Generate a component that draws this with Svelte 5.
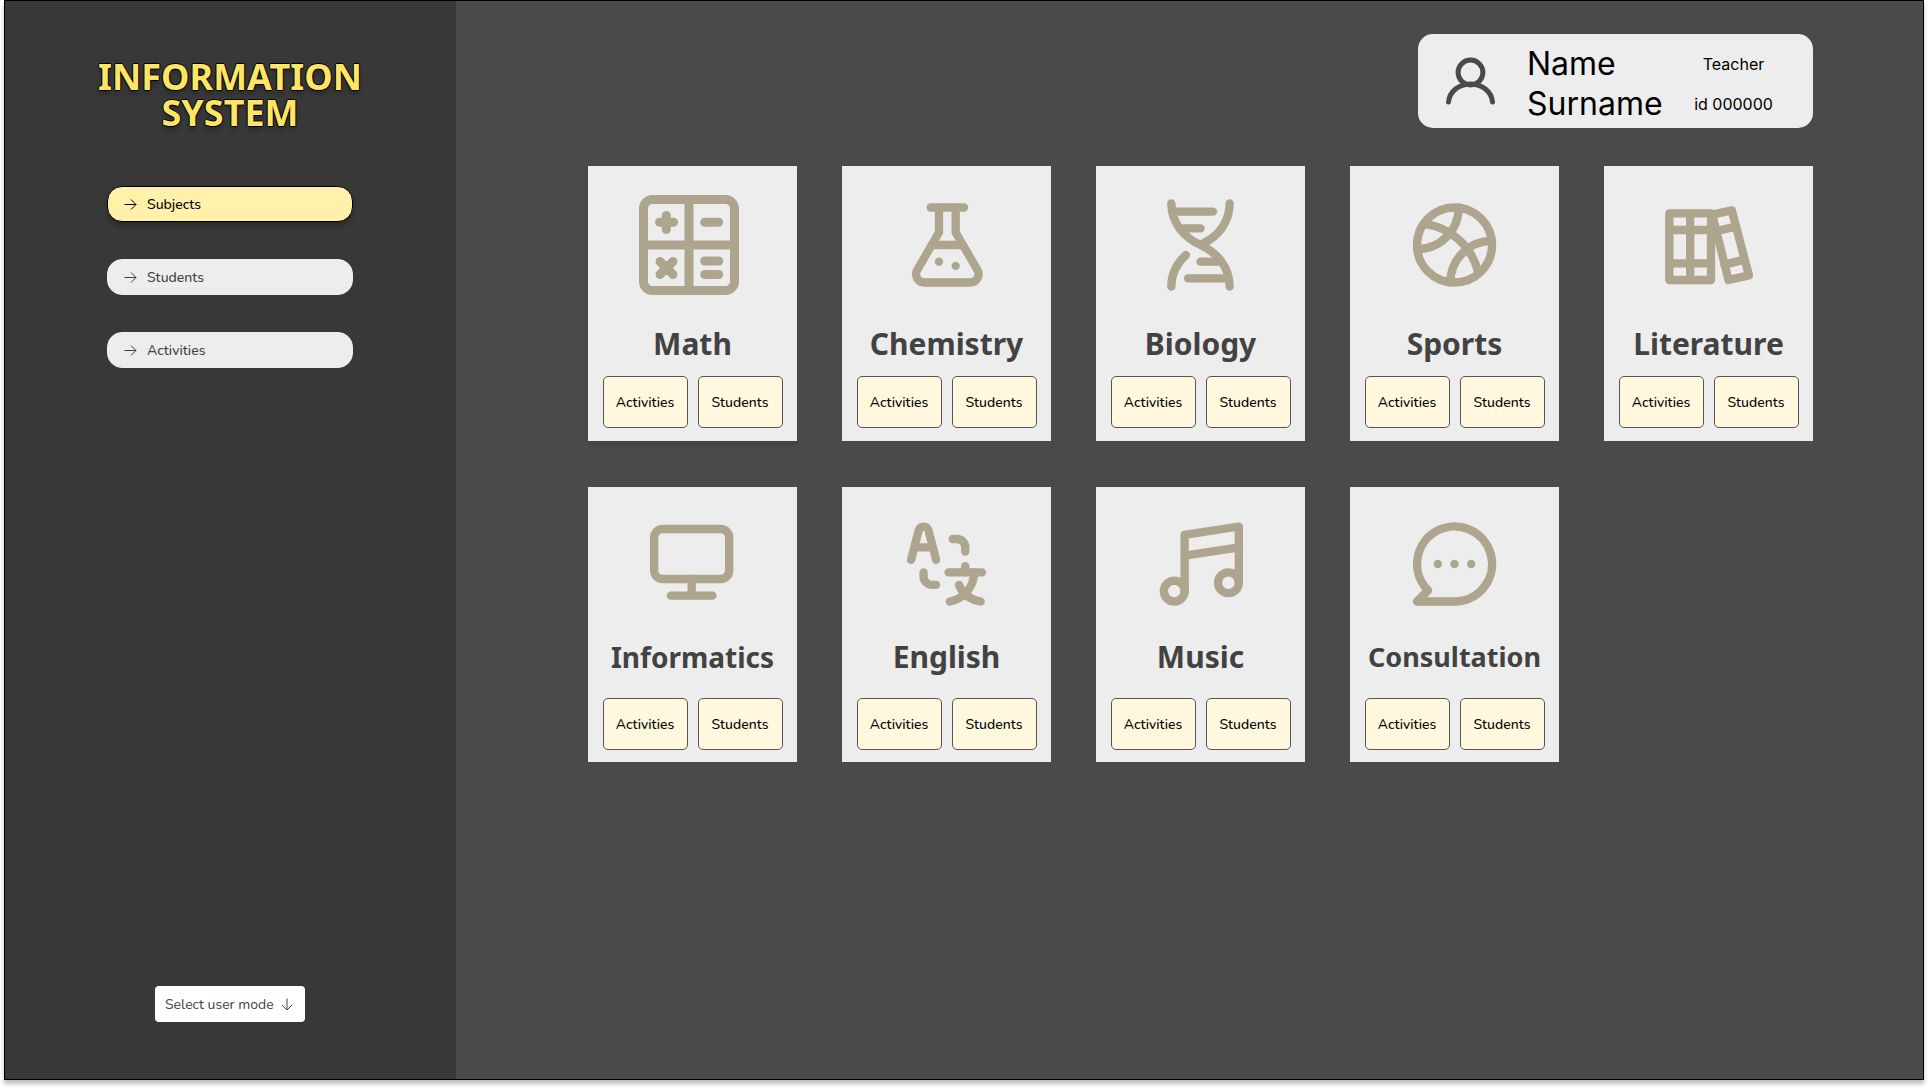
<script>
  const nav = [
    { label: 'Subjects', active: true },
    { label: 'Students', active: false },
    { label: 'Activities', active: false }
  ];

  const subjects = [
    {
      name: 'Math', raised: true, box: '0 0 107 100', weight: 9,
      paths: [
        'M13.500 4.500H86.500A9 9 0 0 1 95.500 13.500V86.500A9 9 0 0 1 86.500 95.500H13.500A9 9 0 0 1 4.500 86.500V13.500A9 9 0 0 1 13.500 4.500Z',
        'M50 4.500V95.500', 'M4.500 50H95.500', 'M20.500 27.300H34.500', 'M27.300 20.500V34.500',
        'M65.700 27.300H79.700', 'M65.700 66H79.700', 'M65.700 79.500H79.700',
        'M21 66.500L34 79.500', 'M34 66.500L21 79.500'
      ]
    },
    {
      name: 'Chemistry', box: '-0.200 0 24 24',
      paths: ['M8 3H16', 'M10 3V9L4.770 18A2 2 0 0 0 6.500 21H17.500A2 2 0 0 0 19.230 18L14 9V3', 'M8.300 12H15.700'],
      dots: [[10, 16], [14, 17]]
    },
    {
      name: 'Biology',
      paths: [
        'M5 2C5 6.500 7.900 10.200 12 12C16.100 13.800 19 17.500 19 22',
        'M19 2C19 6.200 16.500 9.900 12.400 11.700', 'M5 22C5 19.100 6.300 16.400 8.500 14.400',
        'M6 4H15', 'M7.500 8H12', 'M12 16H16.800', 'M9 20H18.500'
      ]
    },
    {
      name: 'Sports',
      paths: ['M12 3A9 9 0 1 0 12 21A9 9 0 1 0 12 3Z', 'M13 3A10 10 0 0 1 3 13', 'M11 21A10 10 0 0 1 21 11', 'M5 7C11 7.800 16.200 12.200 17.700 18.700']
    },
    {
      name: 'Literature',
      paths: [
        'M2.600 4.400H12.600V20.400H2.600Z', 'M7.600 4.400V20.400', 'M2.600 8.400H12.600', 'M2.600 16.400H12.600',
        'M12.900 4.700L17.600 3.700L21.700 19.300L16.800 20.400Z', 'M13.800 8.700L18.500 7.600', 'M15.800 16.700L20.600 15.500'
      ]
    },
    {
      name: 'Informatics', size: 'medium', lower: true, box: '0.200 0.400 24 24',
      paths: ['M5 4H19A2 2 0 0 1 21 6V14A2 2 0 0 1 19 16H5A2 2 0 0 1 3 14V6A2 2 0 0 1 5 4Z', 'M12 16V20', 'M7 20H17']
    },
    {
      name: 'English', lower: true,
      paths: [
        'M3.500 11L5.300 4C5.700 2.700 7.300 2.700 7.700 4L9.500 11', 'M4.700 8H8.300',
        'M13.500 6H14.500A2 2 0 0 1 16.500 8V9', 'M6.500 14V15A2 2 0 0 0 8.500 17H9.500',
        'M12.500 14H20.500', 'M16.500 12.500V14', 'M18.700 14C18.400 17.500 16.500 20.200 12.800 21', 'M15 17C15.800 19 17.500 20.500 20.200 21'
      ]
    },
    {
      name: 'Music', lower: true, box: '-0.200 0 24 24',
      paths: [
        'M8 18.500V5L21 3V16.500', 'M8 10L21 8',
        'M5.500 16A2.500 2.500 0 1 0 5.500 21A2.500 2.500 0 1 0 5.500 16Z', 'M18.500 14A2.500 2.500 0 1 0 18.500 19A2.500 2.500 0 1 0 18.500 14Z'
      ]
    },
    {
      name: 'Consultation', size: 'small', lower: true,
      paths: ['M12 21A9 9 0 1 0 5.650 18.350L3 21Z'],
      dots: [[8, 12], [12, 12], [16, 12]]
    }
  ];
</script>

<div class="page">
  <aside>
    <h1>INFORMATION SYSTEM</h1>
    <nav>
      {#each nav as item}
        <a href="#{item.label.toLowerCase()}" class:active={item.active}>
          <svg viewBox="0 0 13 12" aria-hidden="true"><path d="M0.500 5.500H12M7 0.500L12 5.500L7 10.500" /></svg>
          {item.label}
        </a>
      {/each}
    </nav>
    <label class="mode">
      <select aria-label="Select user mode">
        <option>Select user mode</option>
      </select>
      <svg viewBox="0 0 12 13" aria-hidden="true"><path d="M6 0.500V12M1 7L6 12L11 7" /></svg>
    </label>
  </aside>

  <main>
    <header class="profile">
      <svg viewBox="0 0 50 48" aria-hidden="true">
        <circle cx="24.500" cy="15.500" r="12.400" />
        <path d="M2.500 45C3.500 34.500 13 27 24.500 27S45.500 34.500 46.500 45" />
      </svg>
      <p class="name">Name<br />Surname</p>
      <p class="meta">Teacher<br />id 000000</p>
    </header>

    <section class="grid">
      {#each subjects as s}
        <article class="card" class:lower={s.lower} class:raised={s.raised}>
          <svg viewBox={s.box ?? '0 0 24 24'} stroke-width={s.weight ?? 2} aria-hidden="true">
            {#each s.paths as d}<path {d} />{/each}
            {#each s.dots ?? [] as [cx, cy]}<circle {cx} {cy} r="1" />{/each}
          </svg>
          <h2 class={s.size ?? 'large'}>{s.name}</h2>
          <div class="actions">
            <button type="button">Activities</button>
            <button type="button">Students</button>
          </div>
        </article>
      {/each}
    </section>
  </main>
</div>

<style>
  :global(body) {
    background: #fff;
  }

  .page {
    box-sizing: border-box;
    display: flex;
    min-height: calc(100vh - 8px);
    margin: 0 4px 8px;
    border: 1px solid #000;
    background: #4a4a4a;
    box-shadow: 0 4px 4px rgba(0, 0, 0, 0.25);
  }

  aside {
    box-sizing: border-box;
    flex: 0 0 451px;
    display: flex;
    flex-direction: column;
    align-items: center;
    padding: 58px 90px 57px 89px;
    background: #383838;
  }

  h1 {
    margin: 0;
    color: #ffe566;
    font: 700 36px/36px "Noto Sans", sans-serif;
    text-align: center;
    text-shadow: 1px 0 #000, -1px 0 #000, 0 1px #000, 0 -1px #000, 0 4px 4px rgba(0, 0, 0, 0.25);
  }

  nav {
    display: flex;
    flex-direction: column;
    gap: 37px;
    width: 246px;
    margin-top: 55px;
  }

  nav a {
    box-sizing: border-box;
    display: flex;
    align-items: center;
    gap: 10px;
    height: 36px;
    padding: 2px 17px 0 16px;
    border: 1px solid #ededed;
    border-radius: 15px;
    background: #ededed;
    color: #424242;
    font: 500 14px/20px Nunito, Lato, sans-serif;
    text-decoration: none;
  }

  nav a.active {
    border-color: #000;
    background: #fff1aa;
    color: #000;
    box-shadow: 0 4px 4px rgba(0, 0, 0, 0.25);
  }

  nav svg,
  .mode svg {
    width: 13px;
    height: 12px;
    fill: none;
    stroke: currentColor;
    stroke-width: 1;
  }

  .mode {
    box-sizing: border-box;
    display: flex;
    align-items: center;
    justify-content: space-between;
    width: 150px;
    height: 36px;
    margin-top: auto;
    padding: 1px 12px 0 10px;
    border-radius: 4px;
    background: #fff;
    color: #424242;
  }

  .mode select {
    appearance: none;
    padding: 0;
    border: 0;
    background: none;
    color: inherit;
    font: 400 14px/20px Nunito, Lato, sans-serif;
  }

  .mode svg {
    width: 12px;
    height: 13px;
  }

  main {
    flex: 1;
    display: flex;
    flex-direction: column;
    align-items: flex-end;
    gap: 38px;
    padding: 33px 110px 33px 132px;
  }

  .profile {
    box-sizing: border-box;
    display: flex;
    align-items: center;
    width: 395px;
    height: 94px;
    padding: 0 7px 0 28px;
    border-radius: 15px;
    background: #ededed;
    color: #000;
  }

  .profile svg {
    width: 50px;
    height: 48px;
    margin-right: 31px;
    fill: none;
    stroke: #4a4a4a;
    stroke-width: 5;
    stroke-linecap: round;
  }

  .profile p {
    margin: 0;
    padding-top: 5px;
    font-family: Inter, sans-serif;
    line-height: 40px;
  }

  .profile .name {
    width: 134px;
    font-size: 32px;
  }

  .profile .meta {
    flex: 1;
    font-size: 16px;
    text-align: center;
  }

  .grid {
    display: grid;
    grid-template-columns: repeat(5, 1fr);
    gap: 46px 45px;
    width: 100%;
  }

  .card {
    display: flex;
    flex-direction: column;
    align-items: center;
    padding: 29px 0 13px;
    background: #ededed;
  }

  .card.lower {
    padding: 27px 0 12px;
  }

  .card.raised {
    box-shadow: 0 4px 4px rgba(0, 0, 0, 0.1);
  }

  .card svg {
    width: 107px;
    height: 100px;
    fill: none;
    stroke: #aea58f;
    stroke-linecap: round;
    stroke-linejoin: round;
  }

  .card circle {
    fill: #aea58f;
    stroke: none;
  }

  h2 {
    margin: 29px 0 12px;
    color: #424242;
    font: 700 30px/40px "Noto Sans", sans-serif;
  }

  .lower h2 {
    margin: 23px 0 21px;
  }

  h2.medium {
    font-size: 28px;
  }

  h2.small {
    font-size: 27px;
  }

  .actions {
    display: flex;
    gap: 10px;
  }

  .actions button {
    box-sizing: border-box;
    width: 85px;
    height: 52px;
    padding: 2px 0 0;
    border: 1px solid #555;
    border-radius: 5px;
    background: #fff8df;
    color: #000;
    font: 500 14px/20px Nunito, Lato, sans-serif;
  }
</style>
